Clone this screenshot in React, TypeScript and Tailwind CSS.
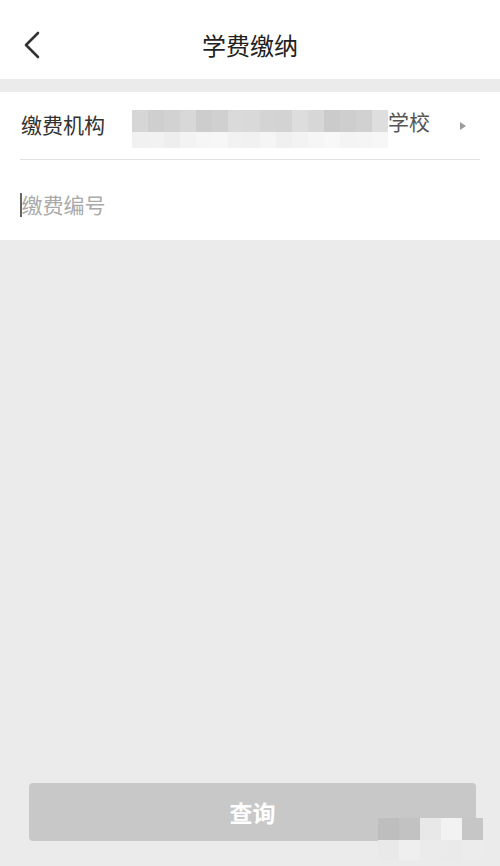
import React from "react";

const topCells = ["#d6d6d6","#cfcfcf","#d2d2d2","#d8d8d8","#cdcdcd","#d0d0d0","#dadada","#d9d9d9","#d4d4d4","#d3d3d3","#dddddd","#d7d7d7","#cbcbcb","#cecece","#d1d1d1","#dedede"];
const botCells = ["#f1f1f1","#f2f2f2","#eeeeee","#f3f3f3","#f6f6f6","#f7f7f7","#f2f2f2","#f1f1f1","#f5f5f5","#f0f0f0","#f3f3f3","#f6f6f6","#f8f8f8","#f4f4f4","#f5f5f5","#f7f7f7"];

export default function App() {
  return (
    <div
      className="w-[500px] h-[866px] bg-[#ebebeb] flex flex-col overflow-hidden"
      style={{ fontFamily: '"Noto Sans CJK SC", "Noto Sans", sans-serif' }}
    >
      {/* header */}
      <div className="h-[79px] bg-white relative flex items-center justify-center shrink-0">
        <svg className="absolute left-[22px] top-[31px]" width="20" height="28" viewBox="0 0 20 28">
          <path d="M16 2 L4 14 L16 26" fill="none" stroke="#333" strokeWidth="2.6" strokeLinecap="round" strokeLinejoin="round" />
        </svg>
        <div className="text-[24px] text-[#222] mt-[10px] leading-none">学费缴纳</div>
      </div>

      {/* card */}
      <div className="mt-[13px] bg-white h-[148px] shrink-0 flex flex-col">
        <div className="h-[68px] mx-[20px] border-b border-[#e2e2e2] flex items-center relative">
          <div className="text-[21px] text-[#333] w-[112px] leading-none pb-[2px] pl-[1px]">缴费机构</div>
          <div className="flex flex-col mt-[6px]">
            <div className="flex h-[22px]">
              {topCells.map((c, i) => (
                <div key={i} className="w-[16px] h-full" style={{ backgroundColor: c }} />
              ))}
            </div>
            <div className="flex h-[16px]">
              {botCells.map((c, i) => (
                <div key={i} className="w-[16px] h-full" style={{ backgroundColor: c }} />
              ))}
            </div>
          </div>
          <div className="text-[21px] text-[#555] leading-none ml-[0px] pb-[8px]">学校</div>
          <div className="absolute right-[14px] top-[30px] w-0 h-0 border-y-[4px] border-y-transparent border-l-[6px] border-l-[#9a9a9a]" />
        </div>
        <div className="flex-1 mx-[20px] flex items-center">
          <div className="w-[1.5px] h-[24px] bg-[#666] mt-[10px]" />
          <div className="text-[21px] text-[#aaa] leading-none mt-[8px]">缴费编号</div>
        </div>
      </div>

      <div className="flex-1" />

      {/* button */}
      <div className="relative h-[83px] shrink-0">
        <div className="ml-[29px] mr-[24px] h-[58px] rounded-[4px] bg-[#c8c8c8] flex items-center justify-center">
          <span className="text-[23px] font-bold text-white leading-none">查询</span>
        </div>
        <div className="absolute left-[378px] top-[35px] flex flex-col">
          <div className="flex h-[22px]">
            <div className="w-[21px] bg-[#bebebe]" />
            <div className="w-[21px] bg-[#c2c2c2]" />
            <div className="w-[21px] bg-[#e8e8e8]" />
            <div className="w-[21px] bg-[#f2f2f2]" />
            <div className="w-[21px] bg-[#c6c6c6]" />
          </div>
          <div className="flex h-[20px]">
            <div className="w-[21px] bg-[#e9e9e9]" />
            <div className="w-[21px] bg-[#efefef]" />
            <div className="w-[21px] bg-[#ebebeb]" />
            <div className="w-[21px] bg-[#eaeaea]" />
            <div className="w-[21px] bg-[#ececec]" />
          </div>
        </div>
      </div>
    </div>
  );
}
